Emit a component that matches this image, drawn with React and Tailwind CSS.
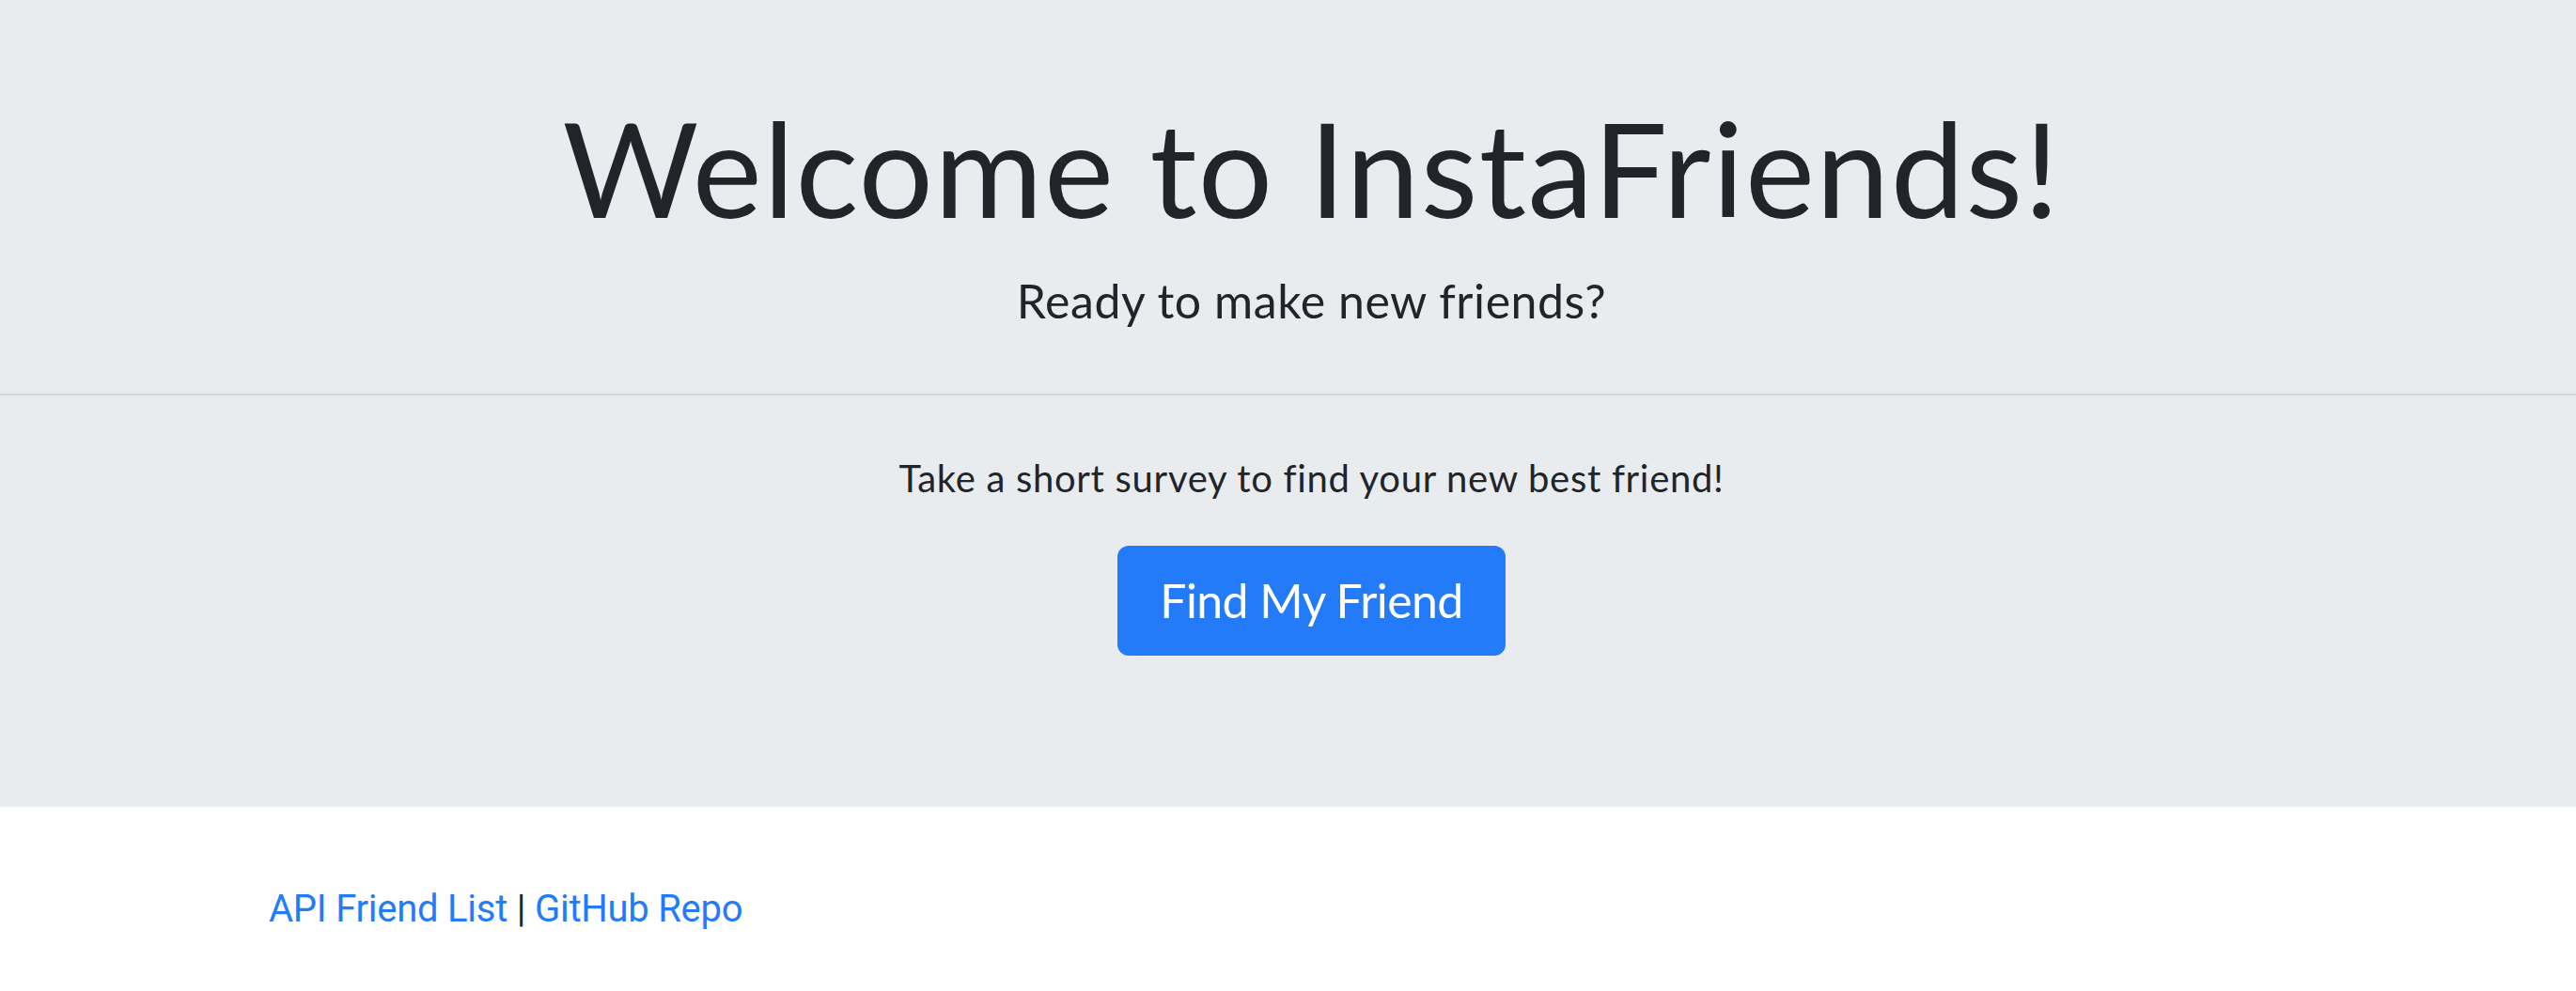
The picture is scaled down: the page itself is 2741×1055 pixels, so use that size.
export default function App() {
  const trebuchet = { fontFamily: '"Lato", "Open Sans", sans-serif' };
  return (
    <div className="min-h-screen w-full bg-white text-[#212529]">
      <div className="flex h-[859px] w-full flex-col bg-[#e9ecef]">
        <div className="flex flex-col items-center pl-[50px]" style={trebuchet}>
          <h1 className="mt-[94px] text-[140px] leading-[1.2] font-normal tracking-[1.4px]">Welcome to InstaFriends!</h1>
          <p className="mt-[28px] text-[50px] leading-[1.2] tracking-[0.55px]">Ready to make new friends?</p>
        </div>
        <div className="mt-[69px] h-[2px] w-full bg-[#d2d5d8]" />
        <div className="flex flex-col items-center pl-[50px]" style={trebuchet}>
          <p className="mt-[58px] text-[40px] leading-[60px] tracking-[0.7px]">Take a short survey to find your new best friend!</p>
          <button className="mt-[42px] flex h-[117px] items-center rounded-[12px] bg-[#237bf9] px-[45px] text-[50px] leading-[75px] tracking-[-0.6px] text-white">
            Find My Friend
          </button>
        </div>
      </div>
      <footer className="pl-[286px] pt-[79px] text-[40px] leading-[60px] tracking-[-0.25px]" style={{ fontFamily: 'Roboto, "Liberation Sans", sans-serif' }}>
        <a href="#" className="text-[#247bf8]">API Friend List</a>
        <span> | </span>
        <a href="#" className="text-[#247bf8]">GitHub Repo</a>
      </footer>
    </div>
  );
}
